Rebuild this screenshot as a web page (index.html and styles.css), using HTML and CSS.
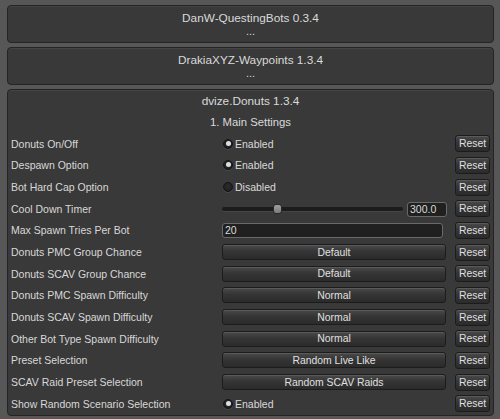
FILE: index.html
```html
<!DOCTYPE html>
<html>
<head>
<meta charset="utf-8">
<link rel="stylesheet" href="styles.css">
</head>
<body>
<div class="page">
  <div class="panel collapsed">
    <div class="title">DanW-QuestingBots 0.3.4</div>
    <div class="dots">...</div>
  </div>
  <div class="panel collapsed">
    <div class="title">DrakiaXYZ-Waypoints 1.3.4</div>
    <div class="dots">...</div>
  </div>
  <div class="panel open">
    <div class="title main">dvize.Donuts 1.3.4</div>
    <div class="section">1. Main Settings</div>

    <div class="row">
      <div class="label">Donuts On/Off</div>
      <div class="control"><span class="radio on"></span><span class="rtext">Enabled</span></div>
      <button class="btn reset">Reset</button>
    </div>
    <div class="row">
      <div class="label">Despawn Option</div>
      <div class="control"><span class="radio on"></span><span class="rtext">Enabled</span></div>
      <button class="btn reset">Reset</button>
    </div>
    <div class="row">
      <div class="label">Bot Hard Cap Option</div>
      <div class="control"><span class="radio"></span><span class="rtext">Disabled</span></div>
      <button class="btn reset">Reset</button>
    </div>
    <div class="row">
      <div class="label">Cool Down Timer</div>
      <div class="control slider-ctl">
        <div class="track"><span class="thumb"></span></div>
        <div class="field value">300.0</div>
      </div>
      <button class="btn reset">Reset</button>
    </div>
    <div class="row">
      <div class="label">Max Spawn Tries Per Bot</div>
      <div class="control"><div class="field text">20</div></div>
      <button class="btn reset">Reset</button>
    </div>
    <div class="row">
      <div class="label">Donuts PMC Group Chance</div>
      <div class="control"><button class="btn drop">Default</button></div>
      <button class="btn reset">Reset</button>
    </div>
    <div class="row">
      <div class="label">Donuts SCAV Group Chance</div>
      <div class="control"><button class="btn drop">Default</button></div>
      <button class="btn reset">Reset</button>
    </div>
    <div class="row">
      <div class="label">Donuts PMC Spawn Difficulty</div>
      <div class="control"><button class="btn drop">Normal</button></div>
      <button class="btn reset">Reset</button>
    </div>
    <div class="row">
      <div class="label">Donuts SCAV Spawn Difficulty</div>
      <div class="control"><button class="btn drop">Normal</button></div>
      <button class="btn reset">Reset</button>
    </div>
    <div class="row">
      <div class="label">Other Bot Type Spawn Difficulty</div>
      <div class="control"><button class="btn drop">Normal</button></div>
      <button class="btn reset">Reset</button>
    </div>
    <div class="row">
      <div class="label">Preset Selection</div>
      <div class="control"><button class="btn drop">Random Live Like</button></div>
      <button class="btn reset">Reset</button>
    </div>
    <div class="row">
      <div class="label">SCAV Raid Preset Selection</div>
      <div class="control"><button class="btn drop">Random SCAV Raids</button></div>
      <button class="btn reset">Reset</button>
    </div>
    <div class="row">
      <div class="label">Show Random Scenario Selection</div>
      <div class="control"><span class="radio on"></span><span class="rtext">Enabled</span></div>
      <button class="btn reset">Reset</button>
    </div>
  </div>
</div>
</body>
</html>
```

FILE: styles.css
```css
html, body {
  margin: 0;
  padding: 0;
  background: #575757;
  width: 500px;
  height: 419px;
  overflow: hidden;
  font-family: "Liberation Sans", Arial, sans-serif;
  color: #d4d4d4;
}

.page {
  padding: 5px 6px 0 7px;
  display: flex;
  flex-direction: column;
  gap: 4px;
}

.panel {
  background: #393939;
  border: 1px solid #242424;
  border-radius: 4px;
  box-shadow: inset 0 1px 0 #444;
}

.collapsed {
  height: 31px;
  padding-top: 5px;
  box-sizing: content-box;
}

.title {
  text-align: center;
  font-size: 11.8px;
  line-height: 14px;
  color: #dadada;
}

.dots {
  text-align: center;
  font-size: 11px;
  line-height: 12px;
  color: #dadada;
}

.open {
  padding: 1px 3px 0 3px;
}

.title.main {
  line-height: 21px;
}

.section {
  text-align: center;
  font-size: 11.3px;
  line-height: 21px;
  color: #dadada;
}

.row {
  height: 21.667px;
  display: flex;
  align-items: center;
}

.label {
  width: 211px;
  flex: none;
  font-size: 10.5px;
  color: #d8d8d8;
  white-space: nowrap;
}

.control {
  width: 225px;
  flex: none;
  display: flex;
  align-items: center;
  height: 16px;
}

.btn {
  font-family: "Liberation Sans", Arial, sans-serif;
  font-size: 10.4px;
  color: #e0e0e0;
  background: linear-gradient(#4a4a4a, #353535 45%, #2b2b2b);
  border: 1px solid #1c1c1c;
  border-radius: 3px;
  box-shadow: inset 0 1px 0 #5a5a5a;
  padding: 0;
  margin: 0;
  text-align: center;
}

.reset {
  width: 35px;
  height: 17px;
  margin-left: 8px;
  flex: none;
}

.drop {
  width: 224px;
  height: 16px;
}

.radio {
  width: 10px;
  height: 10px;
  border-radius: 50%;
  background: radial-gradient(circle at 50% 40%, #2c2c2c, #1c1c1c);
  border: 1px solid #141414;
  box-sizing: border-box;
  margin-left: 1px;
  position: relative;
  box-shadow: 0 1px 0 #4a4a4a;
}

.radio.on::after {
  content: "";
  position: absolute;
  left: 1.5px;
  top: 1px;
  width: 5px;
  height: 5px;
  border-radius: 50%;
  background: #dedede;
}

.rtext {
  font-size: 10.5px;
  margin-left: 2px;
  color: #dadada;
}

.field {
  background: #202020;
  border: 1px solid #6a6a6a;
  border-radius: 3px;
  box-sizing: border-box;
  font-size: 10.5px;
  color: #dadada;
  height: 15px;
  line-height: 13px;
  padding-left: 2px;
}

.field.text {
  width: 221px;
}

.slider-ctl {
  justify-content: space-between;
}

.track {
  width: 181px;
  height: 4px;
  background: #1c1c1c;
  border-radius: 2px;
  box-shadow: 0 1px 0 #464646;
  position: relative;
}

.thumb {
  position: absolute;
  left: 51px;
  top: -3px;
  width: 9px;
  height: 10px;
  border-radius: 3px;
  background: linear-gradient(#a0a0a0, #7a7a7a);
  border: 1px solid #2a2a2a;
  box-sizing: border-box;
}

.field.value {
  width: 40px;
  margin-top: 1px;
}
```
